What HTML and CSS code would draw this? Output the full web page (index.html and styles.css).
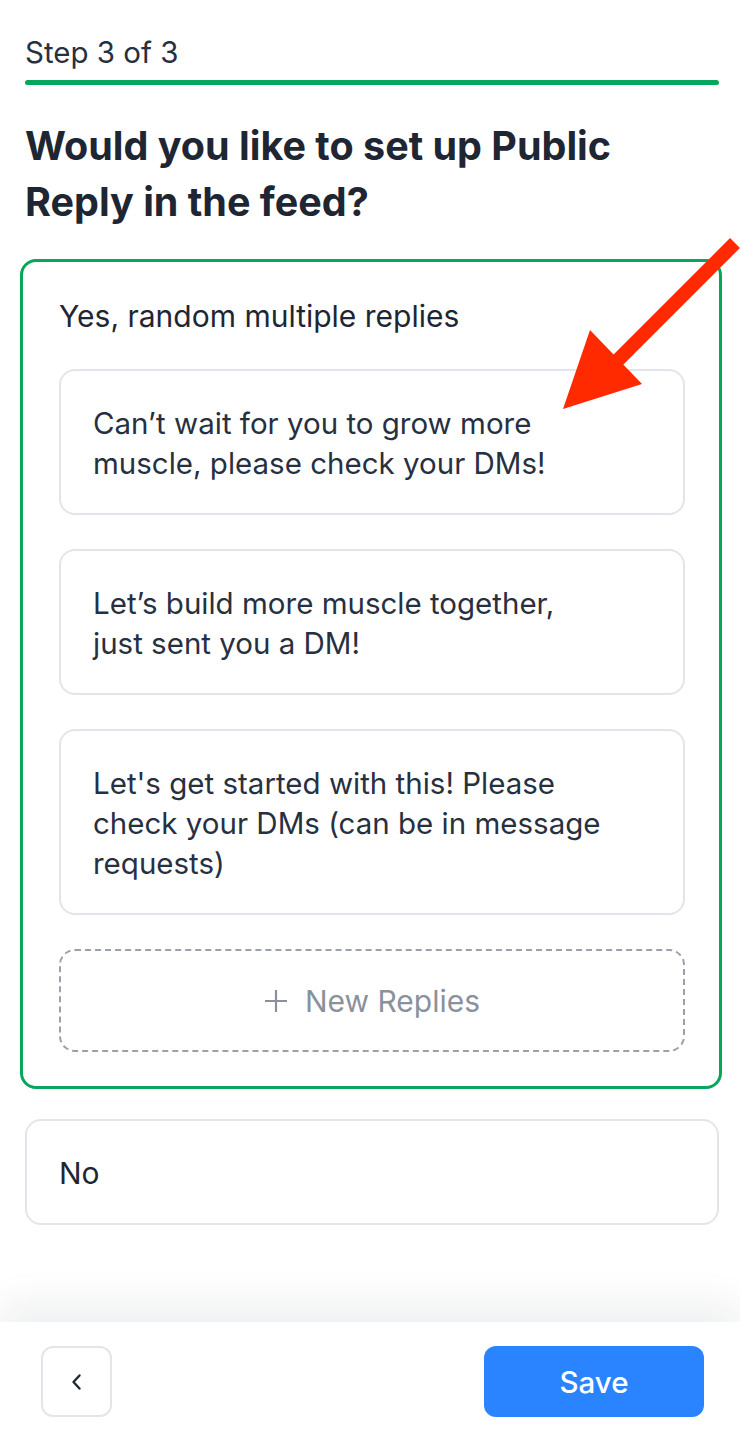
FILE: index.html
```html
<!DOCTYPE html>
<html>
<head>
<meta charset="utf-8">
<link rel="stylesheet" href="styles.css">
</head>
<body>
<div class="page">
  <div class="step">Step 3 of 3</div>
  <div class="progress"></div>
  <h1 class="title">Would you like to set up Public Reply in the feed?</h1>

  <div class="option selected">
    <div class="option-label">Yes, random multiple replies</div>
    <div class="replies">
      <div class="reply">Can’t wait for you to grow more muscle, please check your DMs!</div>
      <div class="reply">Let’s build more muscle together, just sent you a DM!</div>
      <div class="reply">Let's get started with this! Please check your DMs (can be in message requests)</div>
      <div class="add-reply">
        <svg class="plus" width="24" height="24" viewBox="0 0 24 24"><path d="M12 1 V23 M1 12 H23" stroke="#8a919c" stroke-width="2.2" fill="none"/></svg>
        <span>New Replies</span>
      </div>
    </div>
  </div>

  <div class="option plain">
    <div class="option-label">No</div>
  </div>
</div>

<div class="footer">
  <button class="back" aria-label="Back">
    <svg width="14" height="20" viewBox="0 0 14 20"><path d="M9.5 3.5 L3.5 10 L9.5 16.5" fill="none" stroke="#1f2937" stroke-width="2.4" stroke-linecap="round" stroke-linejoin="round"/></svg>
  </button>
  <button class="save">Save</button>
</div>

<svg class="arrow" width="200" height="200" viewBox="0 0 200 200">
  <line x1="195" y1="23" x2="70" y2="148" stroke="#ff2a00" stroke-width="14"/>
  <polygon points="23,189 50,110 102,164" fill="#ff2a00"/>
</svg>
</body>
</html>
```

FILE: styles.css
```css
* { box-sizing: border-box; }
html, body { margin: 0; padding: 0; background: #fff; }
body {
  font-family: Inter, "Noto Sans", "Liberation Sans", sans-serif;
  color: #1f2633;
  width: 740px;
  height: 1438px;
  position: relative;
  overflow: hidden;
}
.page {
  padding: 30px 21px 0 25px;
}
.step {
  font-size: 29.5px;
  line-height: 44px;
  color: #273041;
}
.progress {
  margin-top: 6px;
  height: 5px;
  border-radius: 3px;
  background: #08a65a;
}
.title {
  margin: 33px 0 0;
  font-size: 39.5px;
  line-height: 56px;
  font-weight: 700;
  color: #1f2633;
  max-width: 640px;
}
.option {
  border-radius: 16px;
  background: #fff;
}
.option.selected {
  margin: 29px -3px 0 -5px;
  border: 3px solid #08a65a;
  padding: 34px 34px 34px 36px;
}
.option-label {
  font-size: 30px;
  line-height: 40px;
  color: #1f2633;
}
.replies {
  margin-top: 33px;
  display: flex;
  flex-direction: column;
  gap: 34px;
}
.reply {
  border: 2px solid #e2e5ea;
  border-radius: 16px;
  padding: 32px 73px 30px 32px;
  font-size: 29.5px;
  line-height: 40px;
  color: #273041;
}
.add-reply {
  border: 2px dashed #9aa1ab;
  border-radius: 16px;
  height: 103px;
  display: flex;
  align-items: center;
  justify-content: center;
  gap: 17px;
  font-size: 30px;
  color: #8a919c;
}
.plus { flex: none; }
.option.plain {
  margin-top: 30px;
  border: 2px solid #e2e5ea;
  padding: 32px 32px 32px 32px;
  height: 106px;
}
.footer {
  position: absolute;
  left: 0; right: 0; bottom: 0;
  height: 116px;
  background: #fff;
  box-shadow: 0 -18px 40px rgba(17, 24, 39, 0.07);
  display: flex;
  justify-content: space-between;
  align-items: flex-start;
  padding: 24px 36px 0 41px;
}
.back {
  width: 71px;
  height: 71px;
  border: 2px solid #e2e5ea;
  border-radius: 12px;
  background: #fff;
  display: flex;
  align-items: center;
  justify-content: center;
  padding: 0;
}
.save {
  width: 220px;
  height: 71px;
  border: none;
  border-radius: 12px;
  background: #2a84ff;
  color: #fff;
  font-family: inherit;
  font-size: 29.5px;
  font-weight: 500;
}
.arrow {
  position: absolute;
  left: 540px;
  top: 220px;
}
```
